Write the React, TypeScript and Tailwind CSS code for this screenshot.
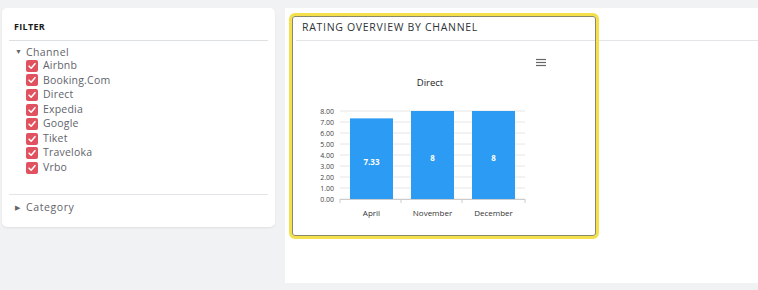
const channels = [
  "Airbnb",
  "Booking.Com",
  "Direct",
  "Expedia",
  "Google",
  "Tiket",
  "Traveloka",
  "Vrbo",
];

const bars = [
  { label: "April", value: 7.33, text: "7.33" },
  { label: "November", value: 8, text: "8" },
  { label: "December", value: 8, text: "8" },
];

function CheckBox() {
  return (
    <span className="flex h-[12px] w-[12px] items-center justify-center rounded-[2px] bg-[#e0525f]">
      <svg viewBox="0 0 12 12" className="h-[10px] w-[10px]">
        <path d="M2.5 6.2 L5 8.6 L9.6 3.2" fill="none" stroke="#fff" strokeWidth="1.8" strokeLinecap="round" strokeLinejoin="round" />
      </svg>
    </span>
  );
}

function FilterPanel() {
  return (
    <div className="ml-[2px] mt-[8px] h-[219px] w-[273px] rounded-[5px] bg-white px-[7px] pt-[12px] shadow-[0_1px_2px_rgba(0,0,0,0.08)]">
      <div className="pl-[5px] text-[9px] font-bold tracking-[0.3px] text-[#1a1a1a]">FILTER</div>
      <div className="mt-[6px] border-t border-[#dde0e3]" />
      <div className="mt-[4px] pl-[6px] text-[10.5px] text-[#5f646b]">
        <div className="flex items-center gap-[4px] leading-[14px]">
          <span className="text-[7px] text-[#666]">▼</span>
          <span className="tracking-[0.4px]">Channel</span>
        </div>
        <div className="ml-[11px] flex flex-col">
          {channels.map((c) => (
            <div key={c} className="flex h-[14.6px] items-center gap-[5px]">
              <CheckBox />
              <span className="tracking-[0.2px]">{c}</span>
            </div>
          ))}
        </div>
      </div>
      <div className="mt-[19px] border-t border-[#e3e5e8]" />
      <div className="mt-[5px] flex items-center gap-[6px] pl-[6px] text-[10.5px] text-[#5f646b]">
        <span className="text-[7px] text-[#666]">▶</span>
        <span className="tracking-[0.6px]">Category</span>
      </div>
    </div>
  );
}

function Chart() {
  const y0 = 199;
  const y8 = 111;
  const scale = (v: number) => y0 - ((y0 - y8) * v) / 8;
  const ticks = [0, 1, 2, 3, 4, 5, 6, 7, 8];
  const xs = [350, 411, 472];
  // svg origin sits at page (289,13)
  const ox = 289;
  const oy = 13;
  return (
    <svg width="310" height="226" className="absolute left-0 top-0" style={{ fontFamily: "'Open Sans', sans-serif" }}>
      <text x={430 - ox} y={86 - oy} textAnchor="middle" fontSize="9.5" fill="#222">
        Direct
      </text>
      {/* hamburger menu */}
      <g stroke="#666" strokeWidth="1.2">
        <line x1={536 - ox} x2={546 - ox} y1={59.5 - oy} y2={59.5 - oy} />
        <line x1={536 - ox} x2={546 - ox} y1={62.5 - oy} y2={62.5 - oy} />
        <line x1={536 - ox} x2={546 - ox} y1={65.5 - oy} y2={65.5 - oy} />
      </g>
      {ticks.map((t) => {
        const y = scale(t) - oy;
        return (
          <g key={t}>
            <line x1={340 - ox} x2={525 - ox} y1={y} y2={y} stroke="#e6e6e6" strokeWidth="1" />
            <text x={334 - ox} y={y + 2.5} textAnchor="end" fontSize="7" fill="#444">
              {t.toFixed(2)}
            </text>
          </g>
        );
      })}
      <line x1={340 - ox} x2={525 - ox} y1={y0 - oy + 0.5} y2={y0 - oy + 0.5} stroke="#ccc" />
      {[340, 401, 462, 525].map((x) => (
        <line key={x} x1={x - ox} x2={x - ox} y1={y0 - oy} y2={y0 - oy + 4} stroke="#ccc" />
      ))}
      {bars.map((b, i) => {
        const top = scale(b.value);
        const x = xs[i] - ox;
        return (
          <g key={b.label}>
            <rect x={x} y={top - oy} width={43} height={y0 - top} fill="#2b9bf4" />
            <text x={x + 21.5} y={(top + y0) / 2 - oy + 6} textAnchor="middle" fontSize="8" fontWeight="bold" fill="#fff">
              {b.text}
            </text>
            <text x={x + 21.5} y={216 - oy} textAnchor="middle" fontSize="8" fill="#333">
              {b.label}
            </text>
          </g>
        );
      })}
    </svg>
  );
}

export default function App() {
  return (
    <div
      className="flex h-[290px] w-[758px] overflow-hidden bg-[#f1f2f4]"
      style={{ fontFamily: "'Open Sans', 'Noto Sans', sans-serif" }}
    >
      <FilterPanel />
      <div className="relative ml-[10px] mt-[8px] h-[275px] flex-1 bg-white">
        <div className="absolute left-[11px] right-0 top-[32px] border-t border-[#e3e5e8]" />
        <div className="relative ml-[4px] mt-[5px] h-[226px] w-[310px] rounded-[6px] border-[3px] border-[#f4e04d] shadow-[inset_0_0_0_1px_#8a8a6a]">
          <div className="pl-[10px] pt-[4px] text-[10.5px] tracking-[0.7px] text-[#2e3338]">
            RATING OVERVIEW BY CHANNEL
          </div>
          <div className="absolute -left-[3px] -top-[3px]">
            <Chart />
          </div>
        </div>
      </div>
    </div>
  );
}
